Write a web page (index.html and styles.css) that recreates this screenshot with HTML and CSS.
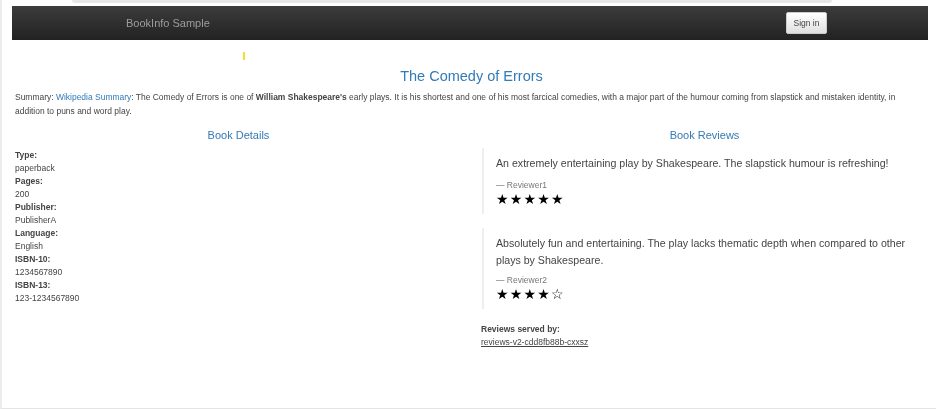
FILE: index.html
```html
<!DOCTYPE html>
<html lang="en">
<head>
    <meta charset="UTF-8">
    <meta name="viewport" content="width=device-width, initial-scale=1.0">
    <title>BookInfo Sample</title>
    <link rel="stylesheet" href="styles.css">
</head>
<body>
    <div class="address-strip"><div class="address-pill"></div></div>

    <nav class="navbar">
        <span class="brand">BookInfo Sample</span>
        <button class="sign-in" type="button">Sign in</button>
    </nav>

    <div class="tick-row"><span class="tick"></span></div>

    <h3 class="book-title">The Comedy of Errors</h3>

    <p class="summary">Summary: <a href="#">Wikipedia Summary</a>: The Comedy of Errors is one of <b>William Shakespeare's</b> early plays. It is his shortest and one of his most farcical comedies, with a major part of the humour coming from slapstick and mistaken identity, in addition to puns and word play.</p>

    <main class="columns">
        <section class="details">
            <h4 class="col-title">Book Details</h4>
            <dl class="facts">
                <dt>Type:</dt>
                <dd>paperback</dd>
                <dt>Pages:</dt>
                <dd>200</dd>
                <dt>Publisher:</dt>
                <dd>PublisherA</dd>
                <dt>Language:</dt>
                <dd>English</dd>
                <dt>ISBN-10:</dt>
                <dd>1234567890</dd>
                <dt>ISBN-13:</dt>
                <dd>123-1234567890</dd>
            </dl>
        </section>

        <section class="reviews">
            <h4 class="col-title">Book Reviews</h4>
            <blockquote class="review">
                <p>An extremely entertaining play by Shakespeare. The slapstick humour is refreshing!</p>
                <small>— Reviewer1</small>
                <div class="stars">★★★★★</div>
            </blockquote>
            <blockquote class="review review-long">
                <p>Absolutely fun and entertaining. The play lacks thematic depth when compared to other plays by Shakespeare.</p>
                <small>— Reviewer2</small>
                <div class="stars">★★★★☆</div>
            </blockquote>
            <div class="served">
                <b>Reviews served by:</b><br>
                <u>reviews-v2-cdd8fb88b-cxxsz</u>
            </div>
        </section>
    </main>
</body>
</html>
```

FILE: styles.css
```css
html {
    height: 100%;
}

body {
    margin: 0;
    height: 100%;
    box-sizing: border-box;
    overflow: hidden;
    background-color: #fff;
    border-left: 2px solid #ececec;
    border-bottom: 1px solid #e4e4e4;
    font-family: "Liberation Sans", Arial, sans-serif;
    color: #444;
    filter: blur(0.55px);
}

a {
    color: #337ab7;
    text-decoration: none;
}

/* what is left of the browser's address bar */
.address-strip {
    height: 6px;
    padding-left: 70px;
    padding-right: 104px;
}

.address-pill {
    height: 3px;
    background-color: #e6e6e6;
    border-radius: 0 0 8px 8px;
}

.navbar {
    display: flex;
    align-items: center;
    justify-content: space-between;
    height: 34px;
    margin-left: 10px;
    margin-right: 8px;
    padding-left: 114px;
    padding-right: 101px;
    background-image: linear-gradient(to bottom, #3c3c3c, #222);
}

.brand {
    font-size: 11px;
    color: #9d9d9d;
}

.sign-in {
    width: 41px;
    height: 22px;
    padding: 0;
    border: 1px solid #ccc;
    border-radius: 2px;
    background-image: linear-gradient(to bottom, #fff, #e0e0e0);
    font-family: inherit;
    font-size: 8.5px;
    color: #444;
}

.tick-row {
    height: 8px;
    margin-top: 12px;
    padding-left: 241px;
}

.tick {
    display: block;
    width: 2px;
    height: 8px;
    background-color: #f7dc2a;
}

.book-title {
    margin: 8px 0 0;
    padding-left: 5px;
    font-size: 14.5px;
    font-weight: 400;
    line-height: 16px;
    text-align: center;
    color: #337ab7;
}

.summary {
    margin: 6px 32px 0 13px;
    font-size: 8.48px;
    line-height: 14px;
}

.columns {
    display: flex;
    margin-top: 10px;
    padding-left: 13px;
    padding-right: 8px;
}

.details {
    width: 466px;
    flex: none;
}

.reviews {
    flex: 1;
}

.col-title {
    margin: 0;
    font-size: 11px;
    font-weight: 400;
    line-height: 14px;
    text-align: center;
    color: #337ab7;
}

.details .col-title {
    padding-right: 19px;
}

.facts {
    margin: 7px 0 0;
    font-size: 8.5px;
    line-height: 13px;
}

.facts dt {
    font-weight: 700;
}

.facts dd {
    margin: 0;
}

.review {
    margin: 6px 0 14px 1px;
    padding: 7px 10px 6px 12px;
    border-left: 2px solid #eee;
}

.review p {
    margin: 0 0 7px;
    font-size: 10.62px;
    line-height: 17px;
}

.review-long p {
    margin-bottom: 5px;
}

.review small {
    display: block;
    font-size: 8.5px;
    line-height: 12px;
    color: #777;
}

.stars {
    font-family: "DejaVu Sans", sans-serif;
    font-size: 14px;
    line-height: 17px;
    letter-spacing: 1.2px;
    color: #000;
}

.served {
    font-size: 8.5px;
    line-height: 13px;
    margin-top: 12px;
}
```
